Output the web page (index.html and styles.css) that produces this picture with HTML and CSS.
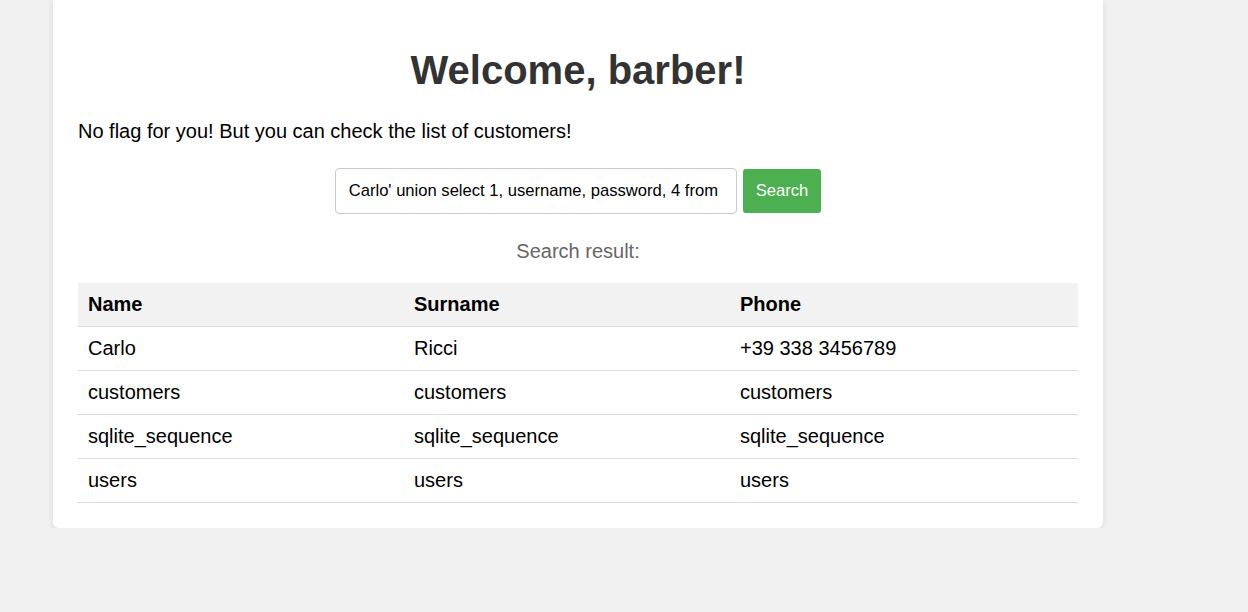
FILE: index.html
```html
<!DOCTYPE html>
<html>
<head>
<meta charset="utf-8">
<link rel="stylesheet" href="styles.css">
</head>
<body>
<div class="card">
  <h1 class="title">Welcome, barber!</h1>
  <p class="intro">No flag for you! But you can check the list of customers!</p>
  <form class="search">
    <input class="search-input" type="text" value="Carlo' union select 1, username, password, 4 from">
    <button class="search-btn" type="button">Search</button>
  </form>
  <p class="result-label">Search result:</p>
  <table class="results">
    <colgroup><col class="c1"><col class="c2"><col class="c3"></colgroup>
    <thead>
      <tr><th>Name</th><th>Surname</th><th>Phone</th></tr>
    </thead>
    <tbody>
      <tr><td>Carlo</td><td>Ricci</td><td>+39 338 3456789</td></tr>
      <tr><td>customers</td><td>customers</td><td>customers</td></tr>
      <tr><td>sqlite_sequence</td><td>sqlite_sequence</td><td>sqlite_sequence</td></tr>
      <tr><td>users</td><td>users</td><td>users</td></tr>
    </tbody>
  </table>
</div>
</body>
</html>
```
FILE: styles.css
```css
html, body {
  margin: 0;
  padding: 0;
  background: #f1f1f1;
  font-family: "Liberation Sans", Arial, sans-serif;
  font-size: 20px;
  color: #000;
}
.card {
  width: 1000px;
  margin-left: 53px;
  background: #fff;
  padding: 21px 25px 25px;
  border-radius: 0 0 6px 6px;
  box-shadow: 0 2px 6px rgba(0,0,0,0.1);
}
.title {
  font-size: 40px;
  font-weight: bold;
  color: #333;
  text-align: center;
  margin: 27px 0 27px;
}
.intro {
  margin: 0 0 25px;
}
.search {
  display: flex;
  justify-content: center;
  align-items: center;
  gap: 6px;
}
.search-input {
  box-sizing: border-box;
  width: 402px;
  height: 46px;
  padding: 0 13px;
  border: 1px solid #ccc;
  border-radius: 4px;
  font-family: "Liberation Sans", Arial, sans-serif;
  font-size: 16.6px;
  color: #000;
}
.search-btn {
  box-sizing: border-box;
  height: 44px;
  padding: 0 13px;
  border: none;
  border-radius: 3px;
  background: #4caf50;
  color: #fff;
  font-family: "Liberation Sans", Arial, sans-serif;
  font-size: 16.6px;
}
.result-label {
  text-align: center;
  color: #666;
  margin: 26px 0 20px;
}
.results {
  width: 1000px;
  border-collapse: collapse;
  table-layout: fixed;
}
.c1 { width: 326px; }
.c2 { width: 326px; }
.c3 { width: 348px; }
.results th, .results td {
  text-align: left;
  padding: 10px;
  border-bottom: 1px solid #ddd;
  line-height: 23px;
}
.results th {
  background: #f2f2f2;
  font-weight: bold;
}
```
